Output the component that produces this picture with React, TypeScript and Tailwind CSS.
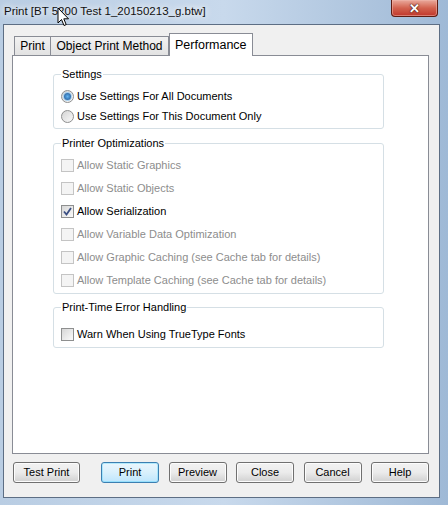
import React from 'react';

const disabledText = 'text-[#8d8d8d]';

function Check({ checked = false, disabled = false }: { checked?: boolean; disabled?: boolean }) {
  return (
    <span
      className={
        disabled
          ? 'w-[13px] h-[13px] shrink-0 border border-[#c4c4c4] bg-[#f4f4f4] flex items-center justify-center'
          : 'w-[13px] h-[13px] shrink-0 border border-[#8e8f8f] bg-linear-to-br from-[#d6d6d6] to-[#fbfbfb] flex items-center justify-center'
      }
    >
      {checked && (
        <svg width="9" height="9" viewBox="0 0 9 9">
          <path d="M1 4.5 L3.5 7.5 L8 1" fill="none" stroke="#3b4f83" strokeWidth="1.8" />
        </svg>
      )}
    </span>
  );
}

function Radio({ selected = false }: { selected?: boolean }) {
  return (
    <span className="w-[13px] h-[13px] shrink-0 rounded-full border border-[#8e8f8f] bg-linear-to-br from-[#d4d4d4] to-[#fafafa] flex items-center justify-center">
      {selected && (
        <span className="w-[7px] h-[7px] rounded-full bg-radial from-[#64b4f0] to-[#174e8e] ring-1 ring-[#a7d0ef]" />
      )}
    </span>
  );
}

function Group({ title, height, children, className }: { title: string; height: string; children: React.ReactNode; className: string }) {
  return (
    <div className={`relative w-[331px] border border-[#d5dfe5] rounded-[3px] ${height} ${className}`}>
      <span className="absolute -top-[8px] left-[7px] bg-white px-[1px] leading-[14px] text-black">{title}</span>
      {children}
    </div>
  );
}

function Row({ h, children, disabled = false }: { h: string; children: React.ReactNode; disabled?: boolean }) {
  return (
    <div className={`flex items-center gap-[3px] pl-[7px] ${h} ${disabled ? disabledText : 'text-black'}`}>{children}</div>
  );
}

function Button({ label, primary = false, w }: { label: string; primary?: boolean; w: string }) {
  return (
    <div
      className={
        primary
          ? `${w} h-[21px] rounded-[3px] border border-[#3c7fb1] bg-linear-to-b from-[#eaf6fd] via-[#d9f0fc] to-[#bee6fd] shadow-[inset_0_0_0_1px_#48d1fc55] flex items-center justify-center text-black`
          : `${w} h-[21px] rounded-[3px] border border-[#707070] bg-linear-to-b from-[#f2f2f2] via-[#ebebeb] to-[#d0d0d0] shadow-[inset_0_0_0_1px_#fcfcfc] flex items-center justify-center text-black`
      }
    >
      {label}
    </div>
  );
}

export default function App() {
  return (
    <div className="relative w-[448px] h-[505px] overflow-hidden bg-linear-to-r from-[#b9cde3] via-[#c8d9ec] to-[#9fb9d6] font-['Liberation_Sans',Arial,sans-serif] text-[11px] flex flex-col">
      {/* title bar */}
      <div className="h-[24px] shrink-0 flex items-start">
        <span className="pl-[4px] pt-[4px] leading-[14px] text-[11.5px] text-[#111] [text-shadow:0_0_6px_#ffffff,0_0_10px_#ffffff]">
          Print [BT 5200 Test 1_20150213_g.btw]
        </span>
        <div className="ml-auto mr-[10px] w-[47px] h-[17px] rounded-b-[4px] border border-t-0 border-[#5e1c12] bg-linear-to-b from-[#e9a99c] via-[#d2624f] to-[#c0352b] shadow-[inset_0_0_0_1px_#f0b8ad88] flex items-center justify-center">
          <span className="text-white font-bold text-[13px] leading-none [text-shadow:0_0_1px_#3a0e08,0_0_2px_#3a0e08]">✕</span>
        </div>
      </div>

      {/* client area */}
      <div className="ml-[3px] mr-[8px] h-[474px] border border-[#5d6e84] bg-[#f0f0f0] flex flex-col">
        <div className="pl-[8px] pt-[8px] pr-[10px]">
          {/* tabs */}
          <div className="flex items-end h-[22px] pl-[2px] text-[12px]">
            <div className="w-[37px] h-[19px] border border-[#898c95] border-b-0 bg-linear-to-b from-[#f2f2f2] to-[#e2e2e2] flex items-center justify-center text-black">
              Print
            </div>
            <div className="w-[118px] h-[19px] border border-[#898c95] border-b-0 border-l-0 bg-linear-to-b from-[#f2f2f2] to-[#e2e2e2] flex items-center justify-center text-black">
              Object Print Method
            </div>
            <div className="relative z-10 -mb-[1px] w-[84px] h-[23px] border border-[#898c95] border-b-0 bg-white flex items-start pt-[2px] pl-[5px] text-black text-[12.5px]">
              Performance
            </div>
          </div>
          {/* tab page */}
          <div className="h-[399px] border border-[#898c95] bg-white flex flex-col pl-[40px] pt-[18px]">
            <Group title="Settings" height="h-[55px]" className="pt-[11px]">
              <Row h="h-[20px]">
                <Radio selected />
                <span>Use Settings For All Documents</span>
              </Row>
              <Row h="h-[20px]">
                <Radio />
                <span>Use Settings For This Document Only</span>
              </Row>
            </Group>
            <Group title="Printer Optimizations" height="h-[151px]" className="mt-[14px] pt-[10px]">
              <Row h="h-[23px]" disabled>
                <Check disabled />
                <span>Allow Static Graphics</span>
              </Row>
              <Row h="h-[23px]" disabled>
                <Check disabled />
                <span>Allow Static Objects</span>
              </Row>
              <Row h="h-[23px]">
                <Check checked />
                <span>Allow Serialization</span>
              </Row>
              <Row h="h-[23px]" disabled>
                <Check disabled />
                <span>Allow Variable Data Optimization</span>
              </Row>
              <Row h="h-[23px]" disabled>
                <Check disabled />
                <span>Allow Graphic Caching (see Cache tab for details)</span>
              </Row>
              <Row h="h-[23px]" disabled>
                <Check disabled />
                <span>Allow Template Caching (see Cache tab for details)</span>
              </Row>
            </Group>
            <Group title="Print-Time Error Handling" height="h-[41px]" className="mt-[13px] pt-[16px]">
              <Row h="h-[20px]">
                <Check />
                <span>Warn When Using TrueType Fonts</span>
              </Row>
            </Group>
          </div>
        </div>
        {/* buttons */}
        <div className="flex items-center pl-[9px] pt-[8px]">
          <Button label="Test Print" w="w-[67px]" />
          <div className="ml-[21px] flex gap-[9.5px]">
            <Button label="Print" primary w="w-[58px]" />
            <Button label="Preview" w="w-[58px]" />
            <Button label="Close" w="w-[58px]" />
            <Button label="Cancel" w="w-[58px]" />
            <Button label="Help" w="w-[58px]" />
          </div>
        </div>
      </div>

      {/* mouse pointer */}
      <svg className="absolute left-[57px] top-[7px]" width="14" height="21" viewBox="0 0 14 21">
        <path d="M1 1 L1 16 L4.5 12.5 L7 18.5 L9.2 17.6 L6.8 11.8 L11.5 11.8 Z" fill="#fff" stroke="#000" strokeWidth="1" strokeLinejoin="round" />
      </svg>
    </div>
  );
}
